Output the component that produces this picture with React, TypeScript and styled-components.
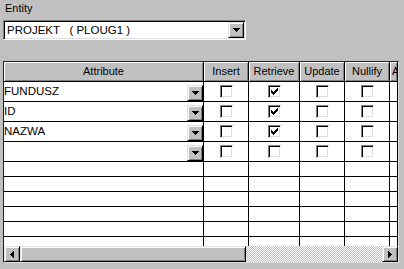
import React from 'react'
import styled, { createGlobalStyle } from 'styled-components'

const GlobalStyle = createGlobalStyle`
  html, body {
    margin: 0;
    padding: 0;
    background: #c0c0c0;
  }
  body {
    font-family: "Liberation Sans", Arial, sans-serif;
    font-size: 11px;
    color: #000;
  }
`

const Window = styled.div`
  width: 404px;
  height: 269px;
  box-sizing: border-box;
  padding: 2px 6px 0 3px;
  background: #c0c0c0;
  overflow: hidden;
`

const FieldLabel = styled.div`
  height: 13px;
  line-height: 13px;
  padding-left: 2px;
  margin-bottom: 5px;
`

const Combo = styled.div`
  width: 243px;
  height: 20px;
  box-sizing: border-box;
  background: #fff;
  border: 1px solid;
  border-color: #808080 #fff #fff #808080;
  box-shadow: inset 1px 1px 0 #000, inset -1px -1px 0 #dfdfdf;
  display: flex;
  align-items: center;
  padding: 0 1px 0 3px;
`

const ComboText = styled.span`
  flex: 1;
  white-space: pre;
  line-height: 13px;
  font-size: 11.5px;
`

const DropButton = styled.div<{ $h?: number }>`
  width: 16px;
  height: ${(p) => p.$h ?? 16}px;
  box-sizing: border-box;
  background: #c0c0c0;
  border: 1px solid;
  border-color: #dfdfdf #000 #000 #dfdfdf;
  box-shadow: inset 1px 1px 0 #fff, inset -1px -1px 0 #808080;
  display: flex;
  align-items: center;
  justify-content: center;
  flex-shrink: 0;
`

const Grid = styled.div`
  margin-top: 21px;
  width: 396px;
  height: 202px;
  box-sizing: border-box;
  border: 1px solid;
  border-color: #202020 #dfdfdf #dfdfdf #202020;
  background: #fff;
  display: flex;
  flex-direction: column;
  overflow: hidden;
`

const Rows = styled.div`
  flex: 1;
  overflow: hidden;
`

const HeaderRow = styled.div`
  display: flex;
  height: 20px;
  box-sizing: border-box;
  border-bottom: 1px solid #000;
  background: #c0c0c0;
`

const HeaderCell = styled.div<{ $w: number; $align?: string }>`
  width: ${(p) => p.$w}px;
  flex-shrink: 0;
  box-sizing: border-box;
  border-right: 1px solid #000;
  box-shadow: inset 1px 1px 0 #fff, inset -1px -1px 0 #808080;
  display: flex;
  align-items: center;
  justify-content: ${(p) => p.$align ?? 'center'};
  padding-left: ${(p) => (p.$align ? 2 : 0)}px;
  overflow: hidden;
  white-space: nowrap;
  line-height: 13px;
`

const Row = styled.div<{ $h: number }>`
  display: flex;
  height: ${(p) => p.$h}px;
  box-sizing: border-box;
  border-bottom: 1px solid #000;
`

const AttrCell = styled.div`
  width: 200px;
  flex-shrink: 0;
  box-sizing: border-box;
  border-right: 1px solid #000;
  display: flex;
  align-items: center;
  white-space: nowrap;
  line-height: 13px;
  font-size: 11.5px;

  & > span {
    flex: 1;
  }

  & > ${DropButton} {
    align-self: flex-end;
  }
`

const CheckCell = styled.div<{ $w: number }>`
  width: ${(p) => p.$w}px;
  flex-shrink: 0;
  box-sizing: border-box;
  border-right: 1px solid #000;
  display: flex;
  align-items: center;
  justify-content: center;
`

const CheckBox = styled.div`
  width: 13px;
  height: 13px;
  box-sizing: border-box;
  background: #fff;
  border: 1px solid;
  border-color: #808080 #fff #fff #808080;
  box-shadow: inset 1px 1px 0 #000, inset -1px -1px 0 #dfdfdf;
  display: flex;
  align-items: center;
  justify-content: center;
`

const ScrollBar = styled.div`
  height: 16px;
  display: flex;
  flex-shrink: 0;
  background-color: #fff;
  background-image: repeating-conic-gradient(#c0c0c0 0 25%, #fff 0 50%);
  background-size: 2px 2px;
`

const ScrollButton = styled(DropButton)``

const Thumb = styled.div`
  width: 226px;
  height: 16px;
  box-sizing: border-box;
  background: #c0c0c0;
  border: 1px solid;
  border-color: #dfdfdf #000 #000 #dfdfdf;
  box-shadow: inset 1px 1px 0 #fff, inset -1px -1px 0 #808080;
`

const Track = styled.div`
  flex: 1;
`

const Arrow = ({ dir }: { dir: 'down' | 'left' | 'right' }) => {
  const pts =
    dir === 'down' ? '0,0 7,0 3.5,4' : dir === 'left' ? '4,0 4,7 0,3.5' : '0,0 0,7 4,3.5'
  const w = dir === 'down' ? 7 : 4
  const h = dir === 'down' ? 4 : 7
  return (
    <svg width={w} height={h} viewBox={`0 0 ${w} ${h}`} shapeRendering="crispEdges">
      <polygon points={pts} fill="#000" />
    </svg>
  )
}

const Tick = () => (
  <svg width="7" height="7" viewBox="0 0 7 7" shapeRendering="crispEdges">
    <path
      d="M6 0h1v3h-1v1h-1v1h-1v1h-1v1h-1v-1h-1v-1h-1v-3h1v1h1v1h1v-1h1v-1h1v-1h1z"
      fill="#000"
    />
  </svg>
)

const permColumns = [
  { key: 'insert', label: 'Insert', width: 45 },
  { key: 'retrieve', label: 'Retrieve', width: 51 },
  { key: 'update', label: 'Update', width: 45 },
  { key: 'nullify', label: 'Nullify', width: 45 },
]

type Perm = { name: string; checked: string[] }

const perms: Perm[] = [
  { name: 'FUNDUSZ', checked: ['retrieve'] },
  { name: 'ID', checked: ['retrieve'] },
  { name: 'NAZWA', checked: ['retrieve'] },
  { name: '', checked: [] },
]

const blankRows = [0, 1, 2, 3, 4, 5, 6]

export default function App() {
  return (
    <>
      <GlobalStyle />
      <Window>
        <FieldLabel>Entity</FieldLabel>
        <Combo>
          <ComboText>{'PROJEKT   ( PLOUG1 )'}</ComboText>
          <DropButton>
            <Arrow dir="down" />
          </DropButton>
        </Combo>

        <Grid>
          <Rows>
            <HeaderRow>
              <HeaderCell $w={200}>Attribute</HeaderCell>
              {permColumns.map((c) => (
                <HeaderCell key={c.key} $w={c.width}>
                  {c.label}
                </HeaderCell>
              ))}
              <HeaderCell $w={8} $align="flex-start">
                A
              </HeaderCell>
            </HeaderRow>

            {perms.map((p, i) => (
              <Row key={i} $h={20}>
                <AttrCell>
                  <span>{p.name}</span>
                  <DropButton $h={16}>
                    <Arrow dir="down" />
                  </DropButton>
                </AttrCell>
                {permColumns.map((c) => (
                  <CheckCell key={c.key} $w={c.width}>
                    <CheckBox>{p.checked.includes(c.key) && <Tick />}</CheckBox>
                  </CheckCell>
                ))}
                <CheckCell $w={8} />
              </Row>
            ))}

            {blankRows.map((i) => (
              <Row key={'b' + i} $h={15}>
                <AttrCell />
                {permColumns.map((c) => (
                  <CheckCell key={c.key} $w={c.width} />
                ))}
                <CheckCell $w={8} />
              </Row>
            ))}
          </Rows>

          <ScrollBar>
            <ScrollButton>
              <Arrow dir="left" />
            </ScrollButton>
            <Thumb />
            <Track />
            <ScrollButton>
              <Arrow dir="right" />
            </ScrollButton>
          </ScrollBar>
        </Grid>
      </Window>
    </>
  )
}
